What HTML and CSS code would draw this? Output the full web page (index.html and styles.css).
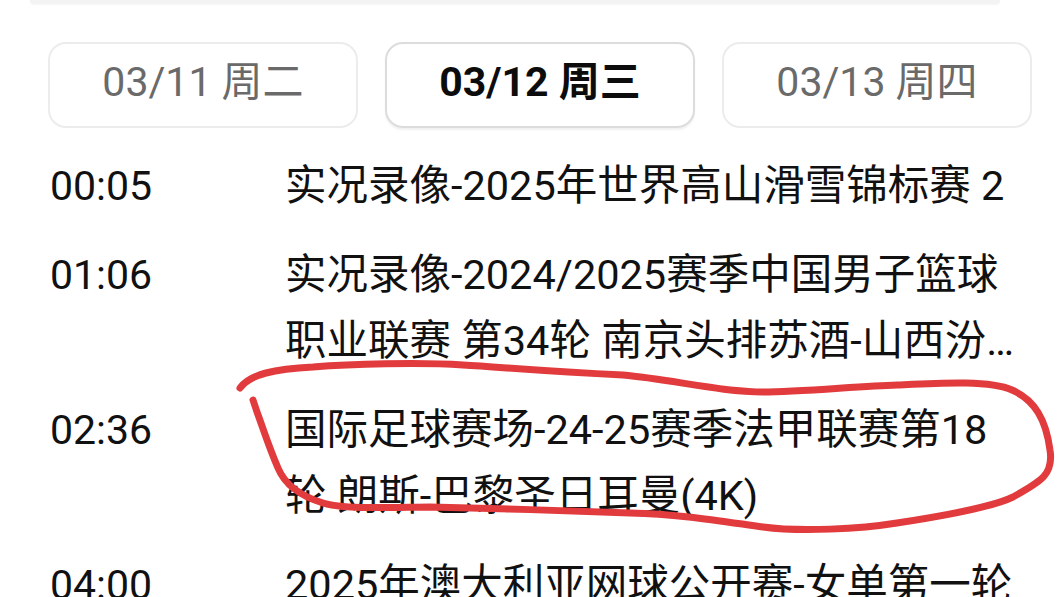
FILE: index.html
```html
<!DOCTYPE html>
<html lang="zh-CN">
<head>
<meta charset="utf-8">
<link rel="stylesheet" href="styles.css">
</head>
<body>
<div class="page">
  <div class="search-edge"></div>
  <div class="tabs">
    <div class="tab">03/11 周二</div>
    <div class="tab tab-active">03/12 周三</div>
    <div class="tab">03/13 周四</div>
  </div>
  <ul class="list">
    <li class="row">
      <span class="time">00:05</span>
      <span class="title">实况录像-2025年世界高山滑雪锦标赛 2</span>
    </li>
    <li class="row">
      <span class="time">01:06</span>
      <span class="title">实况录像-2024/2025赛季中国男子篮球职业联赛 第34轮 南京头排苏酒-山西汾酒</span>
    </li>
    <li class="row">
      <span class="time">02:36</span>
      <span class="title">国际足球赛场-24-25赛季法甲联赛第18轮 朗斯-巴黎圣日耳曼(4K)</span>
    </li>
    <li class="row">
      <span class="time">04:00</span>
      <span class="title">2025年澳大利亚网球公开赛-女单第一轮</span>
    </li>
  </ul>
  <svg class="mark" width="1060" height="597" viewBox="0 0 1060 597">
    <path d="M240,388 C250,374 275,369 313,367 C350,364 420,362 463,365 C500,367 540,371 623,375 C670,379 720,392 763,392 C800,392 860,386 897,385 C940,383 990,380 1012,390 C1035,400 1046,420 1050,450 C1054,475 1040,482 1013,497 C990,508 930,518 897,523 C860,529 800,532 763,527 C720,521 680,514 630,513 C580,511 480,508 430,507 C400,507 345,510 323,503 C300,496 285,485 278,468 C268,445 262,425 257,412 L253,400"/>
  </svg>
</div>
</body>
</html>
```

FILE: styles.css
```css
html, body {
  margin: 0;
  padding: 0;
  background: #ffffff;
}

.page {
  position: relative;
  width: 1060px;
  height: 597px;
  overflow: hidden;
  font-family: Roboto, "Noto Sans CJK SC", "Noto Sans", sans-serif;
  color: #121212;
}

.search-edge {
  height: 4px;
  margin: 0 60px 0 30px;
  background: #f3f3f3;
  border-radius: 0 0 6px 6px;
  box-shadow: 0 1px 2px rgba(0, 0, 0, 0.04);
}

.tabs {
  display: grid;
  grid-template-columns: 310px 310px 310px;
  column-gap: 27px;
  padding: 0 0 0 48px;
  margin-top: 38px;
}

.tab {
  box-sizing: border-box;
  height: 86px;
  border: 2px solid #ececec;
  border-radius: 18px;
  display: flex;
  align-items: center;
  justify-content: center;
  font-size: 41px;
  line-height: 1;
  color: #6a6a6a;
  padding-bottom: 6px;
}

.tab-active {
  border-color: #dcdcdc;
  color: #0c0c0c;
  font-weight: 700;
  box-shadow: 0 2px 2px rgba(0, 0, 0, 0.06);
}

.list {
  list-style: none;
  margin: 0;
  padding: 25px 0 0 50px;
  display: flex;
  flex-direction: column;
  gap: 23px;
}

.row {
  display: flex;
  align-items: flex-start;
  font-size: 41.5px;
  line-height: 66px;
}

.time {
  flex: 0 0 235px;
  font-size: 41px;
  color: #111;
}

.title {
  width: 730px;
  color: #111;
  display: -webkit-box;
  -webkit-line-clamp: 2;
  -webkit-box-orient: vertical;
  overflow: hidden;
}

.mark {
  position: absolute;
  left: 0;
  top: 0;
  pointer-events: none;
}

.mark path {
  fill: none;
  stroke: #e23b3e;
  stroke-width: 7;
  stroke-linecap: round;
  stroke-linejoin: round;
}
```
